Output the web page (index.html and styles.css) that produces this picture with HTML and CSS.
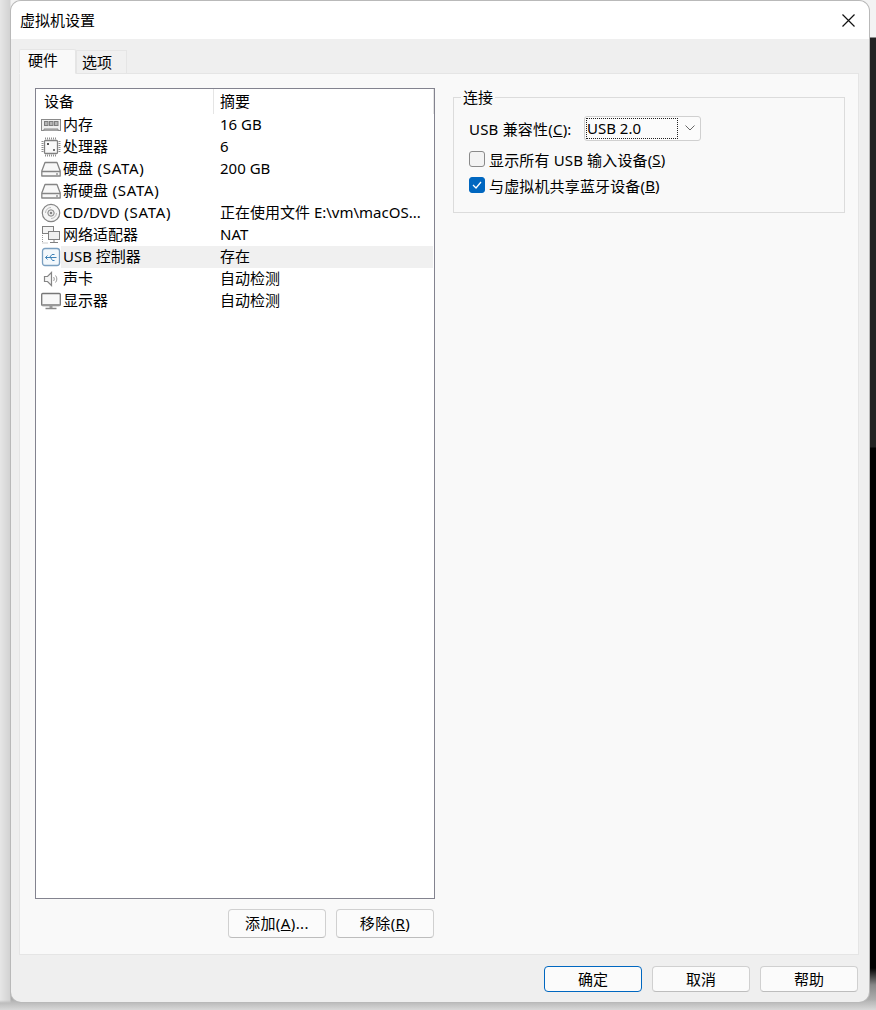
FILE: index.html
```html
<!DOCTYPE html>
<html lang="zh">
<head>
<meta charset="utf-8">
<title>虚拟机设置</title>
<link rel="stylesheet" href="styles.css">
</head>
<body>
<div class="window">
  <header class="titlebar">
    <span class="title">虚拟机设置</span>
    <svg class="close" width="13" height="13" viewBox="0 0 13 13"><path d="M.5.500l12 12M12.500.500l-12 12" stroke="#111" stroke-width="1.200" fill="none"/></svg>
  </header>
  <div class="body">
    <div class="tabs">
      <div class="tab active">硬件</div>
      <div class="tab">选项</div>
    </div>
    <div class="panel">
      <div class="left">
        <div class="list">
          <div class="list-head">
            <div class="col-a">设备</div>
            <div class="col-b">摘要</div>
          </div>
          <div class="row">
            <svg class="ico" width="20" height="20" viewBox="0 0 20 20"><rect x="0.500" y="4.500" width="19" height="11" fill="#f0f0f0" stroke="#8a8a8a"/><path d="M3 15.500v-1.500h14v1.500" fill="#bbb" stroke="#8a8a8a"/><rect x="3.500" y="6.500" width="3.500" height="4" fill="#b5b5b5" stroke="#7d7d7d"/><rect x="8.500" y="6.500" width="3.500" height="4" fill="#b5b5b5" stroke="#7d7d7d"/><rect x="13.500" y="6.500" width="3.500" height="4" fill="#b5b5b5" stroke="#7d7d7d"/></svg>
            <span class="name">内存</span><span class="val">16 GB</span>
          </div>
          <div class="row">
            <svg class="ico" width="20" height="20" viewBox="0 0 20 20"><rect x="3.500" y="3.500" width="13" height="13" rx="1" fill="#fafafa" stroke="#808080" stroke-width="1.300"/><rect x="6" y="6" width="2" height="2" fill="#555"/><rect x="12" y="12" width="2" height="2" fill="#777"/><path d="M4.500 0.500v2M6.500 0.500v2M8.500 0.500v2M10.500 0.500v2M12.500 0.500v2M14.500 0.500v2M4.500 17.500v2M6.500 17.500v2M8.500 17.500v2M10.500 17.500v2M12.500 17.500v2M14.500 17.500v2M0.500 4.500h2M0.500 6.500h2M0.500 8.500h2M0.500 10.500h2M0.500 12.500h2M0.500 14.500h2M17.500 4.500h2M17.500 6.500h2M17.500 8.500h2M17.500 10.500h2M17.500 12.500h2M17.500 14.500h2" stroke="#8f8f8f" fill="none"/></svg>
            <span class="name">处理器</span><span class="val">6</span>
          </div>
          <div class="row">
            <svg class="ico" width="20" height="20" viewBox="0 0 20 20"><path d="M4 3.500h12l3.200 8.500v5h-18.400v-5z" fill="#f8f8f8" stroke="#858585" stroke-width="1.300" stroke-linejoin="round"/><path d="M1 12.500h18" stroke="#858585" stroke-width="1.300"/><rect x="15" y="14.500" width="2" height="1" fill="#666"/></svg>
            <span class="name">硬盘<span class="wide"> (SATA)</span></span><span class="val">200 GB</span>
          </div>
          <div class="row">
            <svg class="ico" width="20" height="20" viewBox="0 0 20 20"><path d="M4 3.500h12l3.200 8.500v5h-18.400v-5z" fill="#f8f8f8" stroke="#858585" stroke-width="1.300" stroke-linejoin="round"/><path d="M1 12.500h18" stroke="#858585" stroke-width="1.300"/><rect x="15" y="14.500" width="2" height="1" fill="#666"/></svg>
            <span class="name">新硬盘<span class="wide"> (SATA)</span></span><span class="val"></span>
          </div>
          <div class="row">
            <svg class="ico" width="20" height="20" viewBox="0 0 20 20"><circle cx="10" cy="10" r="8.700" fill="#f6f6f6" stroke="#858585" stroke-width="1.200"/><circle cx="10" cy="10" r="3.200" fill="#e4e4e4" stroke="#858585"/><circle cx="10" cy="10" r="1" fill="#666"/><path d="M4.500 10a5.500 5.500 0 0 1 5.500-5.500M15.500 10a5.500 5.500 0 0 1-5.500 5.500" fill="none" stroke="#bbb"/></svg>
            <span class="name">CD/DVD<span class="wide"> (SATA)</span></span><span class="val">正在使用文件 E:\vm\macOS...</span>
          </div>
          <div class="row">
            <svg class="ico" width="20" height="20" viewBox="0 0 20 20"><rect x="1.500" y="1.500" width="11" height="7" fill="#f4f4f4" stroke="#808080"/><rect x="7.500" y="6.500" width="11" height="8" fill="#efefef" stroke="#808080"/><path d="M13 14.500v3M9 17.500h8" stroke="#808080" fill="none"/><path d="M1.500 10v8h5" stroke="#999" stroke-dasharray="1 1" fill="none"/></svg>
            <span class="name">网络适配器</span><span class="val">NAT</span>
          </div>
          <div class="row selected">
            <svg class="ico" width="20" height="20" viewBox="0 0 20 20"><rect x="1.500" y="1.500" width="17" height="17" rx="2.500" fill="#f3f8fc" stroke="#7a9fc0" stroke-width="1.300"/><path d="M4.500 10.500h11M6.500 8.500l-2 2 2 2M8.500 10.500l2.500-3h2.500M9.500 10.500l2 3h2" fill="none" stroke="#3f83b8"/></svg>
            <span class="name">USB 控制器</span><span class="val">存在</span>
          </div>
          <div class="row">
            <svg class="ico" width="20" height="20" viewBox="0 0 20 20"><path d="M3.500 7.500h3l4-4v13l-4-4h-3z" fill="#f6f6f6" stroke="#858585" stroke-width="1.200"/><path d="M12.500 8c1 1 1 3 0 4M14.500 6.500c1.800 2 1.800 5 0 7" fill="none" stroke="#999"/></svg>
            <span class="name">声卡</span><span class="val">自动检测</span>
          </div>
          <div class="row">
            <svg class="ico" width="20" height="20" viewBox="0 0 20 20"><rect x="0.700" y="2.500" width="18.600" height="12" rx="1" fill="#f8f8f8" stroke="#777" stroke-width="1.300"/><rect x="1" y="13" width="18" height="2" fill="#999"/><path d="M4.500 17.500h11" stroke="#888" stroke-width="1.500"/><path d="M10 15v2" stroke="#999" stroke-width="3"/></svg>
            <span class="name">显示器</span><span class="val">自动检测</span>
          </div>
        </div>
        <div class="list-actions">
          <button class="btn small" type="button">添加(<u>A</u>)...</button>
          <button class="btn small" type="button">移除(<u>R</u>)</button>
        </div>
      </div>
      <div class="right">
        <fieldset class="group">
          <legend class="legend">连接</legend>
          <div class="compat">
            <span class="compat-label">USB 兼容性(<u>C</u>):</span>
            <div class="select">
              <span class="select-value">USB 2.0</span>
              <svg class="chevron" width="10" height="6" viewBox="0 0 10 6"><path d="M.5.500L5 5 9.500.500" fill="none" stroke="#666"/></svg>
            </div>
          </div>
          <label class="check"><span class="box"></span>显示所有 USB 输入设备(<u>S</u>)</label>
          <label class="check"><span class="box on"><svg width="10" height="8" viewBox="0 0 10 8"><path d="M1 4l3 3 5-6" fill="none" stroke="#fff" stroke-width="1.300"/></svg></span>与虚拟机共享蓝牙设备(<u>B</u>)</label>
        </fieldset>
      </div>
    </div>
    <div class="footer">
      <button class="btn primary" type="button">确定</button>
      <button class="btn" type="button">取消</button>
      <button class="btn" type="button">帮助</button>
    </div>
  </div>
</div>
</body>
</html>
```

FILE: styles.css
```css
* { box-sizing: border-box; }
html, body { margin: 0; height: 100%; }
body {
  width: 876px;
  height: 1010px;
  overflow: hidden;
  padding: 1px 7px 8px 11px;
  font-family: "Noto Sans", "Noto Sans CJK SC", sans-serif;
  font-size: 15px;
  color: #000;
  background:
    linear-gradient(to bottom, rgba(190,190,190,0) 1000px, #bdbdbd 1003px, #d8d8d8 1010px),
    linear-gradient(to right, #e6e6e6 0, #d2d2d2 10px, rgba(0,0,0,0) 11px),
    linear-gradient(to bottom, #f3f3f3 0, #f3f3f3 37px, #222 38px, #222 447px, #000 448px, #000 968px, #888 985px, #c8c8c8 1010px);
}
.window {
  height: 1001px;
  display: flex;
  flex-direction: column;
  background: #efefef;
  border-radius: 10px;
  overflow: hidden;
  box-shadow: 0 0 0 1px #b9b9b9;
}
.titlebar {
  height: 38px;
  flex: none;
  background: #fff;
  display: flex;
  align-items: center;
  justify-content: space-between;
  padding: 0 14px 0 9px;
}
.title { line-height: 38px; }
.close { display: block; }
.body { flex: 1; display: flex; flex-direction: column; padding: 10px 10px 0 8px; min-height: 0; }
.tabs { display: flex; height: 25px; flex: none; align-items: flex-end; position: relative; z-index: 1; }
.tab {
  width: 51px;
  height: 24px;
  line-height: 22px;
  padding-left: 5px;
  background: #f0f0f0;
  border: 1px solid #e5e5e5;
}
.tab.active {
  width: 57px;
  height: 25px;
  line-height: 21px;
  padding-left: 8px;
  background: #f9f9f9;
  border-bottom-color: #f9f9f9;
  border-radius: 2px 2px 0 0;
}
.panel {
  height: 882px;
  flex: none;
  margin-top: -1px;
  background: #f9f9f9;
  border: 1px solid #e5e5e5;
  display: flex;
  padding: 14px 13px 15px 15px;
}
.left { width: 400px; flex: none; display: flex; flex-direction: column; }
.list { height: 811px; flex: none; background: #fff; border: 1px solid #83838f; }
.list-head { display: flex; height: 25px; line-height: 25px; }
.col-a { width: 178px; padding-left: 8px; border-right: 1px solid #e5e5e5; }
.col-b { flex: none; width: 220px; padding-left: 6px; border-right: 1px solid #e5e5e5; }
.row { display: flex; align-items: center; height: 22px; }
.ico { flex: none; margin-left: 5px; margin-right: 2px; }
.name { width: 157px; flex: none; white-space: nowrap; line-height: 20px; padding-bottom: 2px; }
.wide { letter-spacing: 0.7px; }
.val { white-space: nowrap; line-height: 20px; padding-bottom: 2px; }
.selected { background: linear-gradient(to right, #fff 25px, #f0f0f0 25px, #f0f0f0 397px, #fff 397px); }
.list-actions { display: flex; justify-content: flex-end; gap: 10px; margin-top: 10px; padding-right: 1px; }
.btn {
  width: 98px;
  height: 26px;
  padding: 0 0 1px;
  font: inherit;
  line-height: 22px;
  color: #000;
  background: #fbfbfb;
  border: 1px solid #d0d0d0;
  border-bottom-color: #bdbdbd;
  border-radius: 4px;
}
.btn.small { height: 29px; padding-bottom: 2px; letter-spacing: 0.4px; }
.btn.primary { border: 1px solid #0067c0; }
.right { margin-left: 18px; width: 392px; flex: none; }
.group { margin: 0; padding: 0 15px; height: 125px; border: 1px solid #dcdcdc; min-width: 0; }
.legend { padding: 0 2px; margin-left: -8px; line-height: 18px; }
.compat { display: flex; align-items: center; height: 26px; margin-top: 9px; }
.compat-label { width: 115px; flex: none; white-space: nowrap; letter-spacing: 0.2px; }
.select {
  width: 117px;
  height: 25px;
  display: flex;
  align-items: center;
  justify-content: space-between;
  background: #fbfbfb;
  border: 1px solid #d0d0d0;
  border-radius: 3px;
  padding: 1px 5px 1px 1px;
}
.select-value { width: 92px; height: 21px; line-height: 19px; border: 1px dotted #222; }
.check { display: flex; align-items: center; height: 26px; white-space: nowrap; letter-spacing: 0.15px; }
.compat + .check { margin-top: 5px; }
.box {
  width: 16px;
  height: 16px;
  flex: none;
  margin-right: 4px;
  background: #f3f3f3;
  border: 1px solid #8a8a8a;
  border-radius: 3px;
  display: flex;
  align-items: center;
  justify-content: center;
}
.box.on { background: #0067c0; border-color: #0067c0; }
.footer { display: flex; justify-content: flex-end; gap: 10px; padding-top: 11px; padding-right: 1px; }
```
